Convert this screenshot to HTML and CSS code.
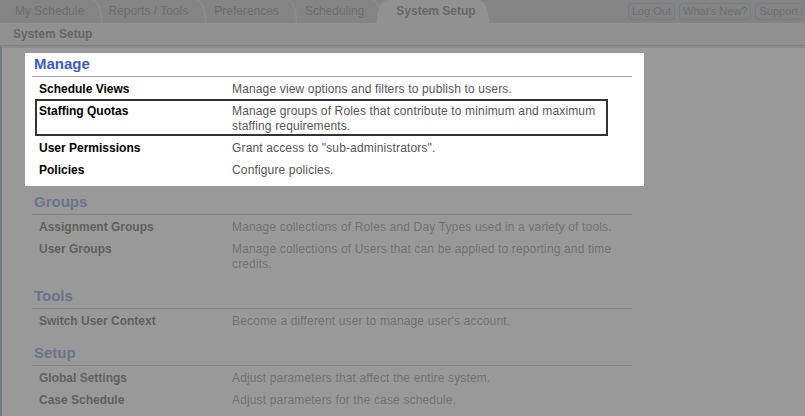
FILE: index.html
```html
<!DOCTYPE html>
<html lang="en">
<head>
<meta charset="utf-8">
<title>System Setup</title>
<link rel="stylesheet" href="styles.css">
</head>
<body>
<header class="topbar">
  <nav class="tabs">
    <a class="tab">My Schedule</a>
    <a class="tab">Reports / Tools</a>
    <a class="tab">Preferences</a>
    <a class="tab">Scheduling</a>
    <a class="tab active">System Setup</a>
  </nav>
  <div class="links">
    <a class="pill">Log Out</a>
    <a class="pill">What's New?</a>
    <a class="pill">Support</a>
  </div>
</header>
<div class="subbar">System Setup</div>
<main class="content">
  <section class="group spotlight">
    <h2>Manage</h2>
    <div class="row"><div class="label">Schedule Views</div><div class="desc">Manage view options and filters to publish to users.</div></div>
    <div class="row marked"><div class="label">Staffing Quotas</div><div class="desc">Manage groups of Roles that contribute to minimum and maximum staffing requirements.</div></div>
    <div class="row"><div class="label">User Permissions</div><div class="desc">Grant access to "sub-administrators".</div></div>
    <div class="row"><div class="label">Policies</div><div class="desc">Configure policies.</div></div>
  </section>
  <section class="group">
    <h2>Groups</h2>
    <div class="row"><div class="label">Assignment Groups</div><div class="desc">Manage collections of Roles and Day Types used in a variety of tools.</div></div>
    <div class="row"><div class="label">User Groups</div><div class="desc">Manage collections of Users that can be applied to reporting and time credits.</div></div>
  </section>
  <section class="group">
    <h2>Tools</h2>
    <div class="row"><div class="label">Switch User Context</div><div class="desc">Become a different user to manage user's account.</div></div>
  </section>
  <section class="group">
    <h2>Setup</h2>
    <div class="row"><div class="label">Global Settings</div><div class="desc">Adjust parameters that affect the entire system.</div></div>
    <div class="row"><div class="label">Case Schedule</div><div class="desc">Adjust parameters for the case schedule.</div></div>
  </section>
</main>
<div class="dim"></div>
</body>
</html>
```
FILE: styles.css
```css
html, body {
  margin: 0;
  background: #fff;
  font-family: "Liberation Sans", Arial, sans-serif;
  font-size: 12px;
  color: #000;
}

.topbar {
  display: flex;
  justify-content: space-between;
  height: 23px;
  background: #a6a6a6;
}

.tabs {
  display: flex;
  padding-left: 2px;
}

.tab {
  position: relative;
  padding: 0 13px;
  line-height: 23px;
  color: #3f3a44;
}

.tab:nth-child(2) {
  padding-left: 11px;
}

.tab::after {
  content: "";
  position: absolute;
  right: -5px;
  top: 0;
  width: 9px;
  height: 22px;
  border-top: 1px solid #d0d0d0;
  border-right: 1px solid #d0d0d0;
  border-top-right-radius: 9px 22px;
}

.tab.active {
  padding-left: 19px;
  background: #dcdcdc;
  font-weight: bold;
  color: #2a2a2a;
  border-top-left-radius: 10px 23px;
  border-top-right-radius: 10px 23px;
}

.tab.active::after {
  display: none;
}

.links {
  display: flex;
  gap: 4px;
  padding: 3px 3px 0 0;
}

.pill {
  flex: none;
  height: 15px;
  line-height: 15px;
  padding: 0 3px;
  border: 1px solid #4f82d6;
  border-radius: 4px;
  font-size: 11px;
  color: #474747;
  white-space: nowrap;
}

.subbar {
  height: 22px;
  line-height: 22px;
  padding-left: 13px;
  background: #dcdcdc;
  border-bottom: 1px solid #969696;
  font-weight: bold;
  color: #222;
}

.content {
  border-top: 2px solid #c8c8c8;
  border-left: 2px solid #5577cc;
  padding: 8px 0 40px 30px;
}

.group {
  width: 600px;
}

.group + .group {
  margin-top: 14px;
}

.group h2 {
  margin: 0;
  padding: 0 0 4px 2px;
  font-size: 15px;
  line-height: 16px;
  color: #3b5cbf;
  border-bottom: 1px solid #aaa;
}

.row {
  position: relative;
  display: grid;
  grid-template-columns: 200px 1fr;
  padding: 5px 0 2px;
  line-height: 15px;
}

.label {
  padding-left: 7px;
  font-weight: bold;
}

.desc {
  color: #555;
  letter-spacing: 0.15px;
}

.marked::after {
  content: "";
  position: absolute;
  left: 3px;
  top: 0;
  width: 569px;
  height: 33px;
  border: 2px solid #333;
}

.spotlight {
  position: relative;
  z-index: 11;
}

.spotlight::before {
  content: "";
  position: absolute;
  top: -3px;
  left: -7px;
  right: -12px;
  bottom: -6px;
  background: #fff;
  z-index: -1;
}

.dim {
  position: fixed;
  inset: 0;
  background: rgba(122, 122, 122, 0.77);
  z-index: 10;
}
```
